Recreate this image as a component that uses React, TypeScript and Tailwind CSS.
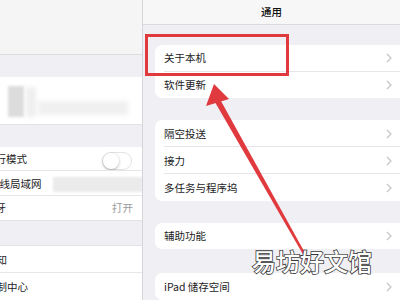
const font = { fontFamily: '"Noto Sans CJK SC", "Noto Sans", sans-serif' };

function Chevron() {
  return (
    <svg width="6" height="10" viewBox="0 0 6 10" className="absolute right-[8px]">
      <polyline points="1,1 5,5 1,9" fill="none" stroke="#c4c4c8" strokeWidth="1.2" />
    </svg>
  );
}

function Row({ label, last }: { label: string; last?: boolean }) {
  return (
    <div className="relative flex h-[27px] items-center pl-[9px]">
      <span className="text-[10.5px] text-[#1c1c1e]">{label}</span>
      <Chevron />
      {!last && <div className="absolute bottom-0 left-[9px] right-0 h-px bg-[#e6e6ea]" />}
    </div>
  );
}

function Card({ items }: { items: string[] }) {
  return (
    <div className="ml-[12px] overflow-hidden rounded-l-[7px] bg-white">
      {items.map((it, i) => (
        <Row key={it} label={it} last={i === items.length - 1} />
      ))}
    </div>
  );
}

function LeftRow({ label, shift, last, children }: { label: string; shift: string; last?: boolean; children?: React.ReactNode }) {
  return (
    <div className="relative flex h-[27px] items-center bg-white">
      <span className={`whitespace-nowrap text-[10.5px] text-[#1c1c1e] ${shift}`}>{label}</span>
      {children}
      {!last && <div className="absolute bottom-0 left-0 right-0 h-px bg-[#e6e6ea]" />}
    </div>
  );
}

export default function App() {
  return (
    <div className="relative flex h-[300px] w-[400px] overflow-hidden bg-[#efeff4]" style={font}>
      {/* left list, cut off by the split view */}
      <div className="flex w-[143px] shrink-0 flex-col overflow-hidden border-r border-[#d6d6da] bg-[#efeff4]">
        <div className="h-[55px] shrink-0 border-b border-[#dcdcdf] bg-[#f5f5f6]" />
        <div className="h-[22px] shrink-0" />
        <div className="relative h-[48px] shrink-0 border-b border-[#e2e2e6] bg-white">
          <div className="absolute left-[8px] top-[9px] h-[31px] w-[16px] bg-[#dcdcdc] blur-[1.5px]" />
          <div className="absolute left-[26px] top-[10px] h-[30px] w-[10px] bg-[#efefef] blur-[2px]" />
          <div className="absolute left-[38px] top-[24px] h-[14px] w-[90px] bg-[#f0f0f0] blur-[2px]" />
        </div>
        <div className="h-[22px] shrink-0" />
        <LeftRow label="飞行模式" shift="ml-[-15px]">
          <div className="absolute left-[102px] top-[5px] h-[18px] w-[30px] rounded-full border border-[#e2e2e4] bg-white">
            <div className="h-[16px] w-[16px] rounded-full bg-white shadow-[0_1px_3px_rgba(0,0,0,0.3)]" />
          </div>
        </LeftRow>
        <LeftRow label="无线局域网" shift="ml-[-11px]">
          <div className="absolute left-[53px] top-[6px] h-[15px] w-[90px] bg-[#ebebeb] blur-[1px]" />
        </LeftRow>
        <LeftRow label="蓝牙" shift="ml-[-15px]" last>
          <span className="absolute left-[112px] text-[10.5px] text-[#9a9a9e]">打开</span>
        </LeftRow>
        <div className="h-[25px] shrink-0 border-t border-[#e2e2e6]" />
        <div className="border-t border-[#e2e2e6]">
          <LeftRow label="通知" shift="ml-[-14px]" />
          <LeftRow label="控制中心" shift="ml-[-14px]" last />
        </div>
      </div>

      {/* right detail */}
      <div className="flex flex-1 flex-col">
        <div className="flex h-[25px] shrink-0 items-center justify-center border-b border-[#dcdcdf] bg-[#f7f7f8]">
          <span className="text-[10.5px] font-medium text-[#111]">通用</span>
        </div>
        <div className="h-[20px]" />
        <Card items={["关于本机", "软件更新"]} />
        <div className="h-[22px]" />
        <Card items={["隔空投送", "接力", "多任务与程序坞"]} />
        <div className="h-[22px]" />
        <Card items={["辅助功能"]} />
        <div className="h-[24px]" />
        <Card items={["iPad 储存空间"]} />
      </div>

      {/* annotation */}
      <div className="absolute left-[145px] top-[34px] h-[42px] w-[144px] border-[3px] border-[#e0393e]" />
      <svg className="absolute left-0 top-0" width="400" height="300" viewBox="0 0 400 300">
        <polygon points="216,92 310,262 308,263 212,97" fill="#e0393e" />
        <polygon points="214,84 206,106 229,99" fill="#e0393e" />
      </svg>
      <div
        className="absolute left-[252px] top-[249px] text-[24px] font-medium leading-none text-white"
        style={{ WebkitTextStroke: "1.6px #3a3a3a", paintOrder: "stroke fill" }}
      >
        易坊好文馆
      </div>
    </div>
  );
}
